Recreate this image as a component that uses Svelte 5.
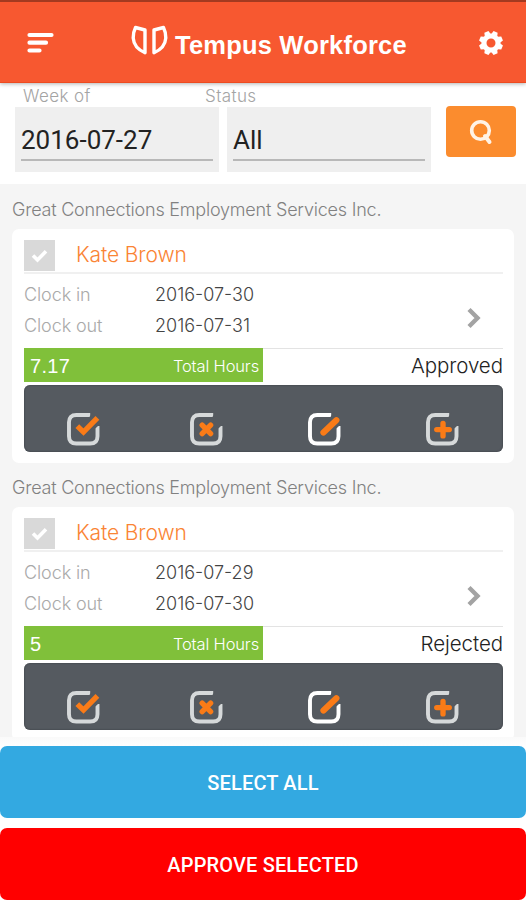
<script>
  const entries = [
    { company: 'Great Connections Employment Services Inc.', name: 'Kate Brown', clockIn: '2016-07-30', clockOut: '2016-07-31', hours: '7.17', status: 'Approved' },
    { company: 'Great Connections Employment Services Inc.', name: 'Kate Brown', clockIn: '2016-07-29', clockOut: '2016-07-30', hours: '5', status: 'Rejected' }
  ]

  const actions = ['approve', 'reject', 'edit', 'add']
</script>

<div class="screen">
  <header>
    <svg class="menu" width="28" height="22" viewBox="0 0 28 22">
      <path d="M2.5 3H24.5M2.5 10.7H19M2.5 18.5H12.5" stroke="#fff" stroke-width="4.2" stroke-linecap="round" />
    </svg>
    <div class="brand">
      <svg width="38" height="32" viewBox="0 0 38 32" fill="none" stroke="#fff" stroke-width="3.4" stroke-linejoin="round">
        <path d="M4.5 2.5 14 5V27.7C7.5 25 2.7 20 2.2 13Q2.2 7 4.5 2.5Z" />
        <path d="M32.5 2.5 23 5V27.7C29.5 25 34.3 20 34.8 13Q34.8 7 32.5 2.5Z" />
      </svg>
      <h1>Tempus Workforce</h1>
    </div>
    <svg class="gear" width="26" height="26" viewBox="-13 -13 26 26">
      <circle r="7" fill="none" stroke="#fff" stroke-width="5" />
      {#each [0, 45, 90, 135, 180, 225, 270, 315] as angle}
        <path d="M-3.2 -8.5 -2.2 -12H2.2L3.2 -8.5Z" fill="#fff" transform="rotate({angle + 22.5})" />
      {/each}
    </svg>
  </header>

  <section class="filters">
    <div class="labels">
      <span>Week of</span>
      <span>Status</span>
    </div>
    <div class="fields">
      <div class="field"><div class="value">2016-07-27</div></div>
      <div class="field"><div class="value">All</div></div>
      <button class="search" aria-label="Search">
        <svg width="24" height="26" viewBox="0 0 24 26" fill="none" stroke="#fff3e6" stroke-width="3.6" stroke-linecap="round">
          <circle cx="11.5" cy="11.5" r="8.8" />
          <path d="M16 17 20.5 23" stroke-width="4" />
        </svg>
      </button>
    </div>
  </section>

  <main>
    {#each entries as entry}
      <p class="company">{entry.company}</p>
      <article class="card">
        <div class="person">
          <span class="check">
            <svg width="17" height="14" viewBox="0 0 17 14" fill="none" stroke="#fff" stroke-width="3.6">
              <path d="M2 6.5 6.5 11 15 2.3" />
            </svg>
          </span>
          <span class="name">{entry.name}</span>
        </div>
        <div class="times">
          <dl>
            <dt>Clock in</dt><dd>{entry.clockIn}</dd>
            <dt>Clock out</dt><dd>{entry.clockOut}</dd>
          </dl>
          <svg class="arrow" width="14" height="22" viewBox="0 0 14 22" fill="none" stroke="#a3a3a3" stroke-width="4.4">
            <path d="M2 2.5 10.5 11 2 19.5" />
          </svg>
        </div>
        <div class="summary">
          <div class="hours">
            <span class="amount">{entry.hours}</span>
            <span class="total">Total Hours</span>
          </div>
          <span class="status">{entry.status}</span>
        </div>
        <div class="actions">
          {#each actions as action}
            <svg class={action} width="35" height="35" viewBox="0 0 34 34" fill="none">
              <path class="frame" d="M23.5 2.9H10Q2.9 2.9 2.9 10V23.5Q2.9 30.6 10 30.6H23.5Q30.6 30.6 30.6 23.5V13.5" />
              <path class="cut" d="M26 0H34V11L28.5 16L22 6Z" />
              {#if action === 'approve'}
                <path class="mark" d="M11 13.7 17 19.5 30.5 5.8" />
              {:else if action === 'reject'}
                <path class="mark" d="M12.8 12.8 21 21M21 12.8 12.8 21" />
              {:else if action === 'edit'}
                <path class="mark" d="M16 20 28.5 8" />
              {:else}
                <path class="mark" d="M17.5 11V23.2M11.4 17.1H23.6" />
              {/if}
            </svg>
          {/each}
        </div>
      </article>
    {/each}
  </main>

  <footer>
    <button class="select">SELECT ALL</button>
    <button class="approve-all">APPROVE SELECTED</button>
  </footer>
</div>

<style>
  :global(body) { background: #fff; }

  .screen {
    display: flex;
    flex-direction: column;
    width: 526px;
    height: 900px;
    overflow: hidden;
    background: #f5f5f5;
    font-family: Inter, "Liberation Sans", sans-serif;
    font-weight: 300;
  }

  svg { display: block; flex: none; }

  button {
    border: 0;
    padding: 0;
    color: #fff;
    font: 500 20px Roboto, sans-serif;
  }

  header {
    display: flex;
    flex: none;
    justify-content: space-between;
    align-items: center;
    height: 83px;
    box-sizing: border-box;
    padding: 1px 22px 0 27px;
    border-top: 2px solid #a33a20;
    border-bottom: 1px solid #ed4b20;
    background: #f75830;
    box-shadow: 0 1px 4px rgba(0, 0, 0, 0.3);
    z-index: 1;
  }

  .brand {
    display: flex;
    align-items: center;
    gap: 6px;
    width: 276px;
    margin-left: 26px;
    margin-right: 21px;
  }
  .brand svg { margin-top: -4px; }

  h1 {
    margin: 5px 0 0;
    color: #fff;
    font: bold 25.5px/30px "Liberation Sans", sans-serif;
    letter-spacing: 0.2px;
    white-space: nowrap;
  }

  .filters {
    flex: none;
    height: 101px;
    background: #fff;
  }

  .labels {
    display: grid;
    grid-template-columns: 182px 1fr;
    padding-left: 23px;
    height: 24px;
    color: #a4a4a4;
    font-size: 17px;
    line-height: 26px;
    letter-spacing: 0.4px;
  }

  .fields {
    display: flex;
    gap: 8px;
    padding-left: 15px;
  }

  .field {
    box-sizing: border-box;
    width: 204px;
    height: 65px;
    padding: 12px 6px 0;
    background: #efefef;
  }

  .value {
    height: 40px;
    border-bottom: 2px solid #b8b8b8;
    color: #222;
    font: 400 26px/43px Roboto, sans-serif;
  }

  .search {
    display: flex;
    justify-content: center;
    align-items: center;
    width: 70px;
    height: 51px;
    margin: -1px 0 0 7px;
    border-radius: 4px;
    background: #fb8c2e;
  }

  main {
    flex: 1;
    min-height: 0;
    overflow: hidden;
    padding: 13px 12px 0;
  }

  .company {
    height: 32px;
    margin: 0;
    color: #818181;
    font-size: 18px;
    line-height: 26px;
    letter-spacing: -0.21px;
    white-space: nowrap;
  }

  .card {
    box-sizing: border-box;
    height: 234px;
    margin-bottom: 12px;
    padding: 11px 11px 0 12px;
    border-radius: 7px;
    background: #fff;
  }

  .person {
    display: flex;
    height: 32px;
    border-bottom: 2px solid #f0f0f0;
  }

  .check {
    display: flex;
    justify-content: center;
    align-items: center;
    width: 31px;
    height: 31px;
    background: #d9d9d9;
  }

  .name {
    margin-left: 21px;
    color: #fa8434;
    font-size: 21px;
    line-height: 29px;
    letter-spacing: -0.1px;
  }

  .times {
    display: flex;
    justify-content: space-between;
    align-items: center;
    height: 74px;
    padding-right: 22px;
  }

  dl {
    display: grid;
    grid-template-columns: 131px 110px;
    grid-auto-rows: 31px;
    margin: -2px 0 0;
    font-size: 18px;
    line-height: 31px;
    white-space: nowrap;
  }
  dt { color: #a9a9a9; letter-spacing: -0.1px; }
  dd { margin: 0; color: #444; }

  .arrow { margin-top: 13px; }

  .summary {
    display: flex;
    justify-content: space-between;
    height: 34px;
    border-top: 1px solid #e3e3e3;
    line-height: 34px;
  }

  .hours {
    display: flex;
    justify-content: space-between;
    box-sizing: border-box;
    width: 239px;
    height: 34px;
    margin-top: -1px;
    padding: 0 4px 0 6px;
    background: #80c03a;
    color: #fff;
  }
  .amount {
    font-family: "Liberation Sans", sans-serif;
    font-size: 20px;
    line-height: 36px;
    letter-spacing: 0.3px;
  }
  .total { font-size: 16.5px; letter-spacing: -0.15px; line-height: 36px; }

  .status {
    color: #222;
    font-size: 20.5px;
    letter-spacing: -0.05px;
  }

  .actions {
    display: grid;
    grid-template-columns: 123px 118px 118px 35px;
    box-sizing: border-box;
    height: 67px;
    margin-top: 2px;
    padding: 27px 0 0 42px;
    border-radius: 6px;
    background: #555a60;
    box-shadow: inset 0 0 2px #33383e;
  }

  .frame { stroke: #d6d9da; stroke-width: 3.8; }
  .edit .frame { stroke: #fff; }
  .cut { fill: #555a60; }
  .mark { stroke: #fa7b17; stroke-width: 5.2; }
  .reject .mark, .add .mark { stroke-linecap: round; }
  .edit .mark { stroke-width: 6; stroke-linecap: round; }

  footer {
    display: flex;
    flex: none;
    flex-direction: column;
    gap: 10px;
    height: 163px;
    box-sizing: border-box;
    padding-top: 9px;
    background: linear-gradient(#fafafa, #fff 12px);
  }
  footer button {
    height: 72px;
    border-radius: 7px;
    line-height: 75px;
    letter-spacing: 0.15px;
  }

  .select { background: #33a9e1; }
  .approve-all { background: #f00; }
</style>
